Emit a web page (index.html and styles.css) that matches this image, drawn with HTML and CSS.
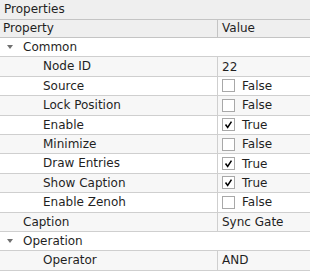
FILE: index.html
```html
<!DOCTYPE html>
<html>
    <head>
        <meta charset="utf-8">
        <title>Properties</title>
        <link rel="stylesheet" href="styles.css">
    </head>
    <body>
        <div class="panel">
            <div class="title">Properties</div>
            <div class="tree">
                <div class="row head">
                    <div class="name">Property</div>
                    <div class="value">Value</div>
                </div>

                <div class="row group"><span class="arrow"></span>Common</div>
                <div class="row alt">
                    <div class="name sub">Node ID</div>
                    <div class="value">22</div>
                </div>
                <div class="row">
                    <div class="name sub">Source</div>
                    <div class="value"><span class="box"></span>False</div>
                </div>
                <div class="row alt">
                    <div class="name sub">Lock Position</div>
                    <div class="value"><span class="box"></span>False</div>
                </div>
                <div class="row">
                    <div class="name sub">Enable</div>
                    <div class="value"><span class="box on"><svg viewBox="0 0 13 13"><path d="M3 6.5 L5.5 10 L10 3"/></svg></span>True</div>
                </div>
                <div class="row alt">
                    <div class="name sub">Minimize</div>
                    <div class="value"><span class="box"></span>False</div>
                </div>
                <div class="row">
                    <div class="name sub">Draw Entries</div>
                    <div class="value"><span class="box on"><svg viewBox="0 0 13 13"><path d="M3 6.5 L5.5 10 L10 3"/></svg></span>True</div>
                </div>
                <div class="row alt">
                    <div class="name sub">Show Caption</div>
                    <div class="value"><span class="box on"><svg viewBox="0 0 13 13"><path d="M3 6.5 L5.5 10 L10 3"/></svg></span>True</div>
                </div>
                <div class="row">
                    <div class="name sub">Enable Zenoh</div>
                    <div class="value"><span class="box"></span>False</div>
                </div>
                <div class="row alt">
                    <div class="name top">Caption</div>
                    <div class="value">Sync Gate</div>
                </div>

                <div class="row group"><span class="arrow"></span>Operation</div>
                <div class="row alt">
                    <div class="name sub">Operator</div>
                    <div class="value">AND</div>
                </div>
            </div>
        </div>
    </body>
</html>
```

FILE: styles.css
```css
body {
    margin: 0;
    padding: 0;
    background: #ffffff;
    color: #1f1f1f;
    font-family: "DejaVu Sans", sans-serif;
    font-size: 12px;
}

.panel {
    width: 310px;
}

.title {
    height: 19px;
    line-height: 19px;
    padding-left: 4px;
    background: #efefef;
    border-bottom: 1px solid #c4c4c4;
}

.tree {
    display: flex;
    flex-direction: column;
}

.row {
    display: flex;
    box-sizing: border-box;
    height: 19.4px;
    line-height: 18px;
    border-bottom: 1px solid #cfcfcf;
    background: #ffffff;
}

.row.alt {
    background: #f7f7f7;
}

.row.head {
    height: 18px;
    line-height: 17px;
    background: #efefef;
    border-bottom: 1px solid #c4c4c4;
}

.name {
    box-sizing: border-box;
    width: 218px;
    padding-left: 3px;
    border-right: 1px solid #cfcfcf;
    white-space: nowrap;
}

.head .name {
    border-right-color: #c4c4c4;
}

.name.sub {
    padding-left: 43px;
}

.name.top {
    padding-left: 23px;
}

.value {
    display: flex;
    align-items: center;
    padding-left: 4px;
    white-space: nowrap;
}

.group {
    align-items: center;
    padding-left: 7px;
}

.arrow {
    width: 0;
    height: 0;
    margin-right: 10px;
    border-left: 3.5px solid transparent;
    border-right: 3.5px solid transparent;
    border-top: 4px solid #707070;
}

.box {
    box-sizing: border-box;
    width: 13px;
    height: 13px;
    margin-right: 7px;
    border: 1px solid #a8a8a8;
    background: #ffffff;
}

.box svg {
    display: block;
    width: 11px;
    height: 11px;
    margin: 0;
}

.box path {
    fill: none;
    stroke: #000000;
    stroke-width: 1.8;
}
```
